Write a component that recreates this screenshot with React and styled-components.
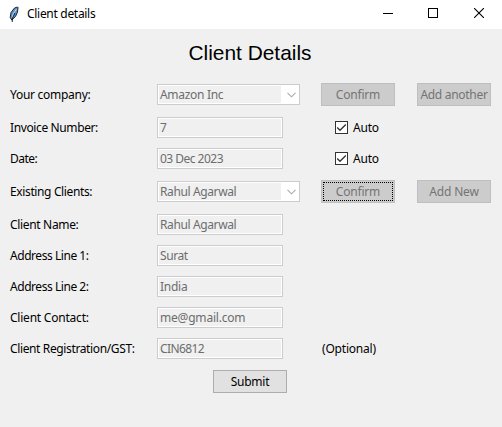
import React from "react";
import styled, { createGlobalStyle } from "styled-components";

const GlobalStyle = createGlobalStyle`
  * { box-sizing: border-box; }
  body { margin: 0; background: #f0f0f0; }
`;

const Window = styled.div`
  width: 502px;
  height: 427px;
  overflow: hidden;
  background: #f0f0f0;
  color: #000;
  font: 12px/16px "Noto Sans", "Open Sans", sans-serif;
`;

const TitleBar = styled.header`
  display: flex;
  align-items: center;
  height: 29px;
  padding-left: 7px;
  background: #fff;
`;

const WindowTitle = styled.span`
  flex: 1;
  margin-left: 4px;
  padding-bottom: 1px;
`;

const Controls = styled.div`
  display: flex;
  height: 29px;
`;

const ControlButton = styled.button`
  display: flex;
  align-items: center;
  justify-content: center;
  width: 46px;
  padding: 0 0 3px ${(p) => p.$shift || 0}px;
  border: 0;
  background: transparent;
`;

const Heading = styled.h1`
  height: 48px;
  margin: 0;
  padding-top: 11px;
  padding-right: 2px;
  text-align: center;
  font: 20.9px/26px "Liberation Sans", Arial, sans-serif;
`;

const Form = styled.form`
  display: flex;
  flex-direction: column;
`;

const Row = styled.div`
  display: grid;
  grid-template-columns: 147px 164px 96px 74px;
  align-items: center;
  height: ${(p) => (p.$tall ? 35 : 31)}px;
  padding-left: 10px;
`;

const Text = styled.span`
  white-space: nowrap;
  letter-spacing: ${(p) => p.$track || 0}px;
`;

const Note = styled(Text)`
  padding-left: 1px;
`;

const Field = styled.div`
  display: flex;
  align-items: stretch;
  width: ${(p) => (p.$combo ? 143 : 126)}px;
  height: 21px;
  padding: 1px;
  border: 1px solid #ccc;
  background: #fff;
  color: #6d6d6d;
`;

const FieldValue = styled.div`
  flex: 1;
  padding-left: 1px;
  line-height: 17px;
  background: #f0f0f0;
`;

const Arrow = styled.div`
  display: flex;
  align-items: center;
  justify-content: center;
  width: 17px;
  padding-left: 3px;
`;

const Button = styled.button`
  width: 74px;
  height: 23px;
  padding: 1px 0 0;
  border: 1px solid ${(p) => (p.disabled ? "#bfbfbf" : "#adadad")};
  background: ${(p) => (p.disabled ? "#ccc" : "#e1e1e1")};
  color: ${(p) => (p.disabled ? "#747474" : "#000")};
  font: inherit;
  white-space: nowrap;
  outline: ${(p) => (p.$focused ? "1px dotted #000" : "none")};
  outline-offset: -3px;
`;

const Check = styled.label`
  display: flex;
  align-items: center;
  gap: 5px;
  padding-left: 14px;
`;

const Box = styled.span`
  display: flex;
  width: 13px;
  height: 13px;
  border: 1px solid #333;
  background: #fff;
`;

const Footer = styled.div`
  display: flex;
  align-items: center;
  justify-content: center;
  height: 35px;
  padding-right: 2px;
`;

const Feather = () => (
  <svg width="16" height="18" viewBox="0 0 16 18">
    <path d="M10.5 1 7.5 2 4 6.5 3.2 11.5 4.8 14 8.5 10.5 10.5 6 11 1.5Z" fill="#5b91c9" stroke="#1d2733" strokeWidth="1" />
    <path d="M9.5 3 6 8.5 5 12" fill="none" stroke="#b9dcf6" strokeWidth="1" />
    <path d="M8 7 5.5 12 5.2 16" fill="none" stroke="#20242a" strokeWidth="1" />
  </svg>
);

const Minimize = () => (
  <svg width="10" height="10" shapeRendering="crispEdges">
    <path d="M0 5.5H10" stroke="#000" />
  </svg>
);

const Maximize = () => (
  <svg width="10" height="10" shapeRendering="crispEdges">
    <rect x=".5" y=".5" width="9" height="9" fill="none" stroke="#000" />
  </svg>
);

const Close = () => (
  <svg width="10" height="10">
    <path d="M0 0 10 10M10 0 0 10" stroke="#000" strokeWidth="1.1" />
  </svg>
);

const Input = ({ value, track, combo }) => (
  <Field $combo={combo}>
    <FieldValue>
      <Text $track={track}>{value}</Text>
    </FieldValue>
    {combo && (
      <Arrow>
        <svg width="9" height="6">
          <path d="M.5 .8 4.5 4.8 8.5 .8" fill="none" stroke="#aaa" strokeWidth="1.1" />
        </svg>
      </Arrow>
    )}
  </Field>
);

const AutoCheck = () => (
  <Check>
    <Box>
      <svg width="11" height="11">
        <path d="M1.2 5.5 4 8.3 9.8 2.5" fill="none" stroke="#333" strokeWidth="1.3" />
      </svg>
    </Box>
    <Text $track={-0.2}>Auto</Text>
  </Check>
);

const Action = ({ children, track, ...rest }) => (
  <Button type="button" {...rest}>
    <Text $track={track}>{children}</Text>
  </Button>
);

export default function App() {
  return (
    <Window>
      <GlobalStyle />
      <TitleBar>
        <Feather />
        <WindowTitle>
          <Text $track={-0.3}>Client details</Text>
        </WindowTitle>
        <Controls>
          <ControlButton $shift={2} aria-label="Minimize"><Minimize /></ControlButton>
          <ControlButton aria-label="Maximize"><Maximize /></ControlButton>
          <ControlButton aria-label="Close"><Close /></ControlButton>
        </Controls>
      </TitleBar>
      <Heading>Client Details</Heading>
      <Form>
        <Row $tall>
          <Text $track={-0.28}>Your company:</Text>
          <Input combo track={-0.3} value="Amazon Inc" />
          <Action disabled track={-0.2}>Confirm</Action>
          <Action disabled track={-0.3}>Add another</Action>
        </Row>
        <Row>
          <Text $track={-0.38}>Invoice Number:</Text>
          <Input value="7" />
          <AutoCheck />
        </Row>
        <Row>
          <Text $track={-0.5}>Date:</Text>
          <Input track={-0.52} value="03 Dec 2023" />
          <AutoCheck />
        </Row>
        <Row $tall>
          <Text $track={-0.37}>Existing Clients:</Text>
          <Input combo track={-0.38} value="Rahul Agarwal" />
          <Action disabled $focused track={-0.2}>Confirm</Action>
          <Action disabled track={-0.15}>Add New</Action>
        </Row>
        <Row>
          <Text $track={-0.33}>Client Name:</Text>
          <Input track={-0.38} value="Rahul Agarwal" />
        </Row>
        <Row>
          <Text $track={-0.45}>Address Line 1:</Text>
          <Input track={-0.4} value="Surat" />
        </Row>
        <Row>
          <Text $track={-0.45}>Address Line 2:</Text>
          <Input track={-0.25} value="India" />
        </Row>
        <Row>
          <Text $track={-0.22}>Client Contact:</Text>
          <Input track={-0.2} value="me@gmail.com" />
        </Row>
        <Row>
          <Text $track={-0.37}>Client Registration/GST:</Text>
          <Input track={-0.6} value="CIN6812" />
          <Note $track={-0.2}>(Optional)</Note>
        </Row>
        <Footer>
          <Action track={-0.25}>Submit</Action>
        </Footer>
      </Form>
    </Window>
  );
}
